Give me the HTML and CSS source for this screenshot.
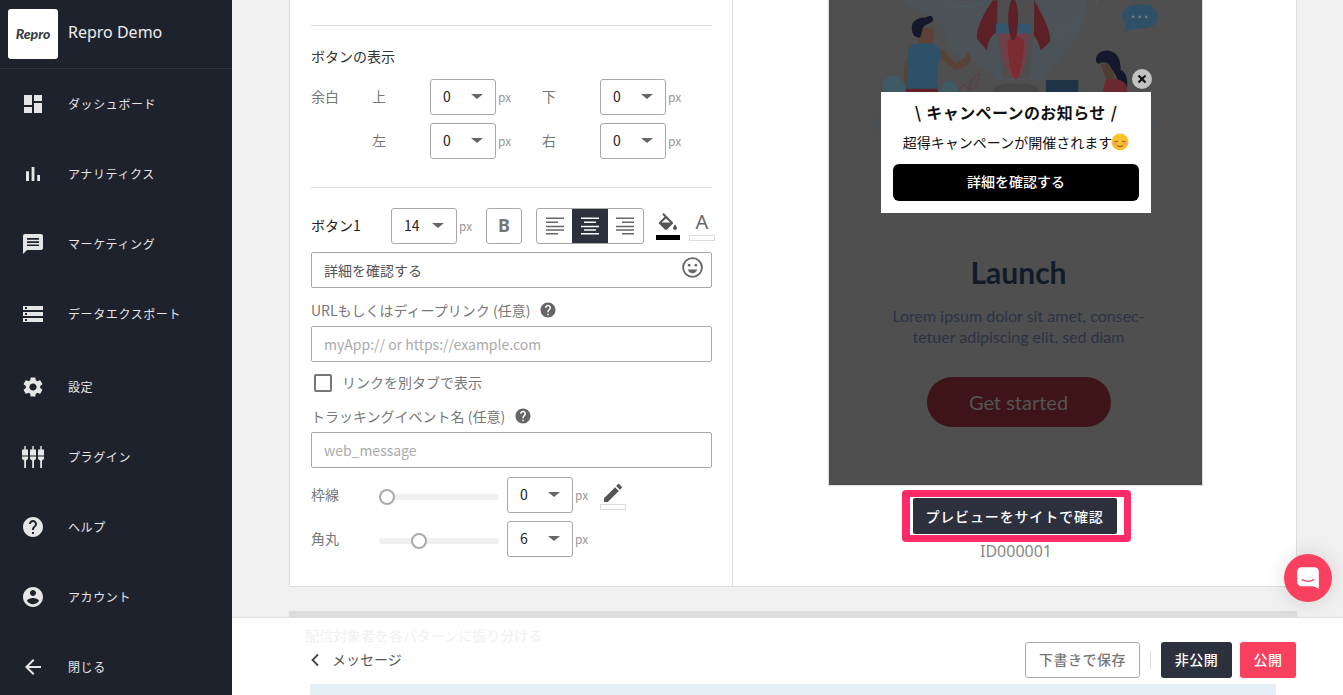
FILE: index.html
```html
<!DOCTYPE html>
<html lang="ja">
<head>
<meta charset="utf-8">
<title>Repro Demo</title>
<link rel="stylesheet" href="styles.css">
</head>
<body>
<aside class="sidebar">
  <div class="brand">
    <div class="logo">Repro</div>
    <div class="brand-name">Repro Demo</div>
  </div>
  <nav class="nav">
    <a class="nav-item"><svg class="nav-icon" viewBox="0 0 24 24"><path d="M3 13h8V3H3v10zm0 8h8v-6H3v6zm10 0h8V11h-8v10zm0-18v6h8V3h-8z"/></svg><span>ダッシュボード</span></a>
    <a class="nav-item"><svg class="nav-icon" viewBox="0 0 24 24"><path d="M5 9.2h3V19H5zM10.6 5h2.8v14h-2.8zm5.6 8H19v6h-2.8z"/></svg><span>アナリティクス</span></a>
    <a class="nav-item"><svg class="nav-icon" viewBox="0 0 24 24"><path fill-rule="evenodd" d="M20 2H4c-1.100 0-2 .9-2 2v18l4-4h14c1.100 0 2-.9 2-2V4c0-1.100-.9-2-2-2zM6 6h12v1.700H6zM6 9.200h12v1.700H6zM6 12.400h12v1.700H6z"/></svg><span>マーケティング</span></a>
    <a class="nav-item"><svg class="nav-icon" viewBox="0 0 24 24"><path d="M2 20h20v-4H2v4zm2-3h2v2H4v-2zM2 4v4h20V4H2zm4 3H4V5h2v2zm-4 7h20v-4H2v4zm2-3h2v2H4v-2z"/></svg><span>データエクスポート</span></a>
    <a class="nav-item nav-group"><svg class="nav-icon" viewBox="0 0 24 24"><path d="M19.140 12.940c.04-.3.06-.61.06-.94 0-.32-.02-.64-.07-.94l2.030-1.580c.18-.14.23-.41.12-.61l-1.920-3.320c-.12-.22-.37-.29-.59-.22l-2.390.96c-.5-.38-1.030-.7-1.620-.94l-.36-2.540c-.04-.24-.24-.41-.48-.41h-3.840c-.24 0-.43.17-.47.41l-.36 2.540c-.59.24-1.130.57-1.620.94l-2.390-.96c-.22-.08-.47 0-.59.22L2.740 8.870c-.12.21-.08.47.12.61l2.030 1.580c-.05.3-.09.63-.09.94s.02.64.07.94l-2.030 1.580c-.18.14-.23.41-.12.61l1.920 3.320c.12.22.37.29.59.22l2.390-.96c.5.38 1.030.7 1.620.94l.36 2.540c.05.24.24.41.48.41h3.840c.24 0 .44-.17.47-.41l.36-2.540c.59-.24 1.130-.56 1.620-.94l2.390.96c.22.08.47 0 .59-.22l1.920-3.320c.12-.22.07-.47-.12-.61l-2.010-1.580zM12 15.600c-1.980 0-3.600-1.620-3.600-3.600s1.620-3.600 3.600-3.600 3.600 1.620 3.600 3.600-1.620 3.600-3.600 3.600z"/></svg><span>設定</span></a>
    <a class="nav-item"><svg class="nav-icon" viewBox="0 0 24 24"><path d="M3.300 1h1.400v3.500h2.300v6H1v-6h2.300zM11.300 1h1.400v3.500H15v6H9v-6h2.300zM19.300 1h1.400v3.500H23v6h-6v-6h2.300zM1 11.500h6v2.500l-2 1.500V23H3.200v-7.500L1 14zM9 11.500h6v2.500l-2 1.500V23h-1.800v-7.500L9 14zM17 11.500h6v2.500l-2 1.500V23h-1.800v-7.500L17 14z"/></svg><span>プラグイン</span></a>
    <a class="nav-item"><svg class="nav-icon" viewBox="0 0 24 24"><path d="M12 2C6.480 2 2 6.480 2 12s4.480 10 10 10 10-4.480 10-10S17.520 2 12 2zm1 17h-2v-2h2v2zm2.070-7.750l-.9.92C13.450 12.900 13 13.500 13 15h-2v-.5c0-1.100.45-2.100 1.170-2.830l1.240-1.260c.37-.36.59-.86.59-1.410 0-1.100-.9-2-2-2s-2 .9-2 2H8c0-2.210 1.790-4 4-4s4 1.790 4 4c0 .88-.36 1.680-.93 2.250z"/></svg><span>ヘルプ</span></a>
    <a class="nav-item"><svg class="nav-icon" viewBox="0 0 24 24"><path d="M12 2C6.480 2 2 6.480 2 12s4.480 10 10 10 10-4.480 10-10S17.520 2 12 2zm0 3c1.660 0 3 1.340 3 3s-1.340 3-3 3-3-1.340-3-3 1.340-3 3-3zm0 14.200c-2.500 0-4.710-1.280-6-3.220.03-1.990 4-3.080 6-3.080 1.990 0 5.970 1.090 6 3.080-1.290 1.940-3.500 3.220-6 3.220z"/></svg><span>アカウント</span></a>
    <a class="nav-item"><svg class="nav-icon" viewBox="0 0 24 24"><path d="M20 11H7.830l5.590-5.590L12 4l-8 8 8 8 1.410-1.410L7.830 13H20v-2z"/></svg><span>閉じる</span></a>
  </nav>
</aside>

<main class="main">
  <section class="card">
    <div class="editor">
      <hr class="rule">
      <h3 class="section-title">ボタンの表示</h3>
      <div class="margins">
        <span class="field-label">余白</span>
        <span class="field-label">上</span>
        <div class="select"><span>0</span><i class="caret"></i></div>
        <span class="unit">px</span>
        <span class="field-label">下</span>
        <div class="select"><span>0</span><i class="caret"></i></div>
        <span class="unit">px</span>
        <span></span>
        <span class="field-label">左</span>
        <div class="select"><span>0</span><i class="caret"></i></div>
        <span class="unit">px</span>
        <span class="field-label">右</span>
        <div class="select"><span>0</span><i class="caret"></i></div>
        <span class="unit">px</span>
      </div>
      <hr class="rule rule-lower">
      <div class="format-row">
        <span class="format-label">ボタン1</span>
        <div class="select"><span>14</span><i class="caret"></i></div>
        <span class="unit unit-format">px</span>
        <div class="bold-btn">B</div>
        <div class="align-group">
          <div class="align-btn"><svg viewBox="0 0 18 18"><path d="M0 .5h18V2H0zM0 4.600h12v1.500H0zM0 8.700h18v1.500H0zM0 12.300h18v1.500H0zM0 16h12v1.500H0z"/></svg></div>
          <div class="align-btn is-active"><svg viewBox="0 0 18 18"><path d="M0 .5h18V2H0zM3 4.600h12v1.500H3zM0 8.700h18v1.500H0zM3 12.300h12v1.500H3zM0 16h18v1.500H0z"/></svg></div>
          <div class="align-btn"><svg viewBox="0 0 18 18"><path d="M0 .5h18V2H0zM6 4.600h12v1.500H6zM0 8.700h18v1.500H0zM0 12.300h18v1.500H0zM6 16h12v1.500H6z"/></svg></div>
        </div>
        <div class="color-tool tool-fill">
          <svg viewBox="0 0 24 20"><path d="M16.560 9.940L7.620 1 6.210 2.410l2.380 2.380-5.150 5.150c-.59.59-.59 1.540 0 2.120l5.500 5.500c.29.29.68.44 1.060.44s.77-.15 1.060-.44l5.500-5.500c.59-.58.59-1.530 0-2.120zM19 12.500s-2 2.170-2 3.500c0 1.100.9 2 2 2s2-.9 2-2c0-1.330-2-3.500-2-3.500z"/><path fill="#fff" d="M10 6.500L14.300 10.500H5.600z"/></svg>
          <span class="swatch swatch-black"></span>
        </div>
        <div class="color-tool tool-text">
          <span class="tool-letter">A</span>
          <span class="swatch swatch-white"></span>
        </div>
      </div>
      <div class="input-wrap">
        <input class="text-input has-value" type="text" value="詳細を確認する">
        <svg class="smile" viewBox="0 0 22 22"><circle cx="11" cy="11" r="9" fill="none" stroke="#666" stroke-width="1.800"/><circle cx="7.800" cy="8.800" r="1.300" fill="#666"/><circle cx="14.200" cy="8.800" r="1.300" fill="#666"/><path d="M6.500 13h9c-.6 2.300-2.400 3.600-4.500 3.600S7.100 15.300 6.500 13z" fill="#666"/></svg>
      </div>
      <div class="hint-label hint-url">URLもしくはディープリンク (任意)<svg class="hint-icon" viewBox="0 0 24 24"><path d="M12 2C6.480 2 2 6.480 2 12s4.480 10 10 10 10-4.480 10-10S17.520 2 12 2zm1 17h-2v-2h2v2zm2.070-7.750l-.9.92C13.450 12.900 13 13.500 13 15h-2v-.5c0-1.100.45-2.100 1.170-2.830l1.240-1.260c.37-.36.59-.86.59-1.410 0-1.100-.9-2-2-2s-2 .9-2 2H8c0-2.210 1.790-4 4-4s4 1.790 4 4c0 .88-.36 1.680-.93 2.250z"/></svg></div>
      <input class="text-input" type="text" placeholder="myApp:// or https://example.com">
      <label class="check-row"><span class="checkbox"></span><span class="check-text">リンクを別タブで表示</span></label>
      <div class="hint-label hint-track">トラッキングイベント名 (任意)<svg class="hint-icon" viewBox="0 0 24 24"><path d="M12 2C6.480 2 2 6.480 2 12s4.480 10 10 10 10-4.480 10-10S17.520 2 12 2zm1 17h-2v-2h2v2zm2.070-7.750l-.9.92C13.450 12.900 13 13.500 13 15h-2v-.5c0-1.100.45-2.100 1.170-2.830l1.240-1.260c.37-.36.59-.86.59-1.410 0-1.100-.9-2-2-2s-2 .9-2 2H8c0-2.210 1.790-4 4-4s4 1.790 4 4c0 .88-.36 1.680-.93 2.250z"/></svg></div>
      <input class="text-input" type="text" placeholder="web_message">
      <div class="slider-row slider-border">
        <span class="slider-label">枠線</span>
        <div class="slider"><i class="thumb" style="left:0"></i></div>
        <div class="select"><span>0</span><i class="caret"></i></div>
        <span class="unit unit-slider">px</span>
        <div class="color-tool tool-pencil">
          <svg viewBox="0 0 24 24"><path d="M3 17.250V21h3.750L17.810 9.940l-3.750-3.750L3 17.250zM20.710 7.040c.39-.39.39-1.020 0-1.410l-2.340-2.340c-.39-.39-1.020-.39-1.410 0l-1.830 1.830 3.750 3.750 1.830-1.830z"/></svg>
          <span class="swatch swatch-white"></span>
        </div>
      </div>
      <div class="slider-row slider-radius">
        <span class="slider-label">角丸</span>
        <div class="slider"><i class="thumb" style="left:32px"></i></div>
        <div class="select"><span>6</span><i class="caret"></i></div>
        <span class="unit unit-slider">px</span>
      </div>
    </div>

    <div class="preview-col">
      <div class="preview">
        <svg class="art" viewBox="3 0 1122 660">
          <path fill="#4c5358" d="M225 0C260 45 345 40 352 105 360 185 470 175 505 240L650 240C690 160 785 120 775 0Z"/>
          <path fill="#4b4e53" d="M135 380C135 345 165 330 200 330L200 395 150 395C140 395 135 390 135 380ZM930 330C965 335 990 355 990 375 990 390 980 395 965 395L930 395Z"/>
          <path fill="none" stroke="#3f6a72" stroke-width="2" stroke-dasharray="7 6" d="M350 0C380 25 440 25 480 0M810 0C800 50 720 80 670 110"/>
          <path fill="#5c2026" d="M497 0C465 40 445 90 448 115L478 150C480 120 495 100 510 95L510 0Z"/>
          <path fill="#5c2026" d="M620 0C650 50 672 100 668 125L640 150C632 120 620 100 605 95Z"/>
          <path fill="#4e4e4e" d="M510 0H620V95L605 235H525L510 95Z"/>
          <path fill="#6f4049" d="M512 95H604C602 165 585 235 565 238 540 235 518 165 512 95Z"/>
          <path fill="#7a2c31" d="M540 130C545 100 585 100 590 130 588 180 575 235 565 238 552 235 542 180 540 130Z"/>
          <rect x="505" y="70" width="105" height="30" fill="#33566c"/>
          <ellipse cx="557" cy="58" rx="15" ry="62" fill="#5c2026"/>
          <path fill="#464646" d="M495 276C495 258 520 250 565 250 610 250 635 258 635 276Z"/>
          <path fill="#3d5a65" d="M165 276C160 245 175 222 200 228 225 232 225 255 250 276ZM335 276C345 245 370 215 395 276Z"/>
          <path fill="none" stroke="#6a2f34" stroke-width="2" d="M395 276C400 255 410 245 420 270M425 270C425 240 445 225 455 220 455 245 445 265 425 270Z"/>
          <path fill="#5a4235" d="M235 180C225 210 228 250 236 276H255L260 180ZM330 168L385 210C400 205 420 195 432 180L422 155 410 175 385 190 340 145Z"/>
          <path fill="#5a4235" d="M268 85H316V125L300 140H275Z"/>
          <path fill="#14182a" d="M252 85C250 60 275 50 295 52 305 45 318 45 316 60 312 72 290 70 285 85 280 100 282 115 270 112 258 110 253 100 252 85Z"/>
          <path fill="#2f5168" d="M262 130L315 130C335 140 345 160 340 172L330 190V268H236L238 175 240 150C245 140 255 132 262 130Z"/>
          <rect x="234" y="266" width="96" height="10" fill="#5c2026"/>
          <rect x="655" y="240" width="98" height="36" rx="3" fill="#1f3446"/>
          <path fill="#4f3c33" d="M820 190H860V235H835Z"/>
          <path fill="#14182a" d="M806 180C806 160 825 148 845 152 870 155 882 180 880 210 895 215 905 235 898 276H880C875 250 868 225 855 210 850 190 835 180 815 190 810 192 806 186 806 180Z"/>
          <path fill="#6a2a30" d="M835 238C850 232 875 236 888 245 900 255 900 265 900 276H825Z"/>
          <path fill="#2f5168" d="M885 45C885 25 905 12 935 12H950C975 12 992 25 992 50 992 72 970 85 945 85H915C908 92 898 95 888 95 895 88 898 80 896 72 888 65 885 55 885 45Z"/>
          <circle cx="918" cy="50" r="4" fill="#6d7d88"/><circle cx="938" cy="50" r="4" fill="#6d7d88"/><circle cx="957" cy="50" r="4" fill="#6d7d88"/>
        </svg>
        <div class="lp">
          <div class="lp-title">Launch</div>
          <p class="lp-text">Lorem ipsum dolor sit amet, consec-<br>tetuer adipiscing elit, sed diam</p>
          <div class="lp-cta">Get started</div>
        </div>
        <div class="popup">
          <div class="popup-close"><svg viewBox="0 0 12 12"><path d="M2.500 2.500l7 7M9.500 2.500l-7 7" stroke="#111" stroke-width="2.200" fill="none"/></svg></div>
          <div class="popup-title">\ キャンペーンのお知らせ /</div>
          <div class="popup-text">超得キャンペーンが開催されます<svg class="popup-emoji" viewBox="0 0 18 18"><circle cx="9" cy="9" r="8.500" fill="#fbc02d"/><path d="M3.500 8c1 1 2.500 1 3.500 0M11 8c1 1 2.500 1 3.500 0M6 12.500c2 1.200 4 1.200 6 0" fill="none" stroke="#7a4a12" stroke-width="1"/><circle cx="4" cy="10.500" r="1.700" fill="#f59a6b"/><circle cx="14" cy="10.500" r="1.700" fill="#f59a6b"/></svg></div>
          <div class="popup-btn">詳細を確認する</div>
        </div>
      </div>
      <div class="highlight"><div class="preview-btn">プレビューをサイトで確認</div></div>
      <div class="preview-id">ID000001</div>
    </div>
  </section>

  <section class="card-next">
    <div class="card-next-title">配信対象者を各パターンに振り分ける</div>
  </section>

  <footer class="actionbar">
    <div class="actions">
      <a class="back"><svg viewBox="0 0 10 14"><path d="M8 1.500L2.500 7 8 12.500" fill="none" stroke="#444" stroke-width="1.800"/></svg><span>メッセージ</span></a>
      <button class="btn btn-outline">下書きで保存</button>
      <span class="btn-sep"></span>
      <button class="btn btn-dark">非公開</button>
      <button class="btn btn-red">公開</button>
    </div>
    <div class="notice"></div>
  </footer>

  <div class="messenger"><svg viewBox="0 0 24 24"><path fill="#fff" d="M6 2h12c2.200 0 4 1.800 4 4v16l-5-2.300H6c-2.200 0-4-1.800-4-4V6c0-2.200 1.800-4 4-4z"/><path fill="none" stroke="#f9415f" stroke-width="1.100" stroke-linecap="round" d="M6.500 13.500c3.200 1.800 7.800 1.800 11 0"/></svg></div>
</main>
</body>
</html>
```
FILE: styles.css
```css
* { box-sizing: border-box; }
html, body { margin: 0; height: 100%; }
body {
  display: flex;
  height: 695px;
  overflow: hidden;
  font-family: "Noto Sans CJK JP", "Noto Sans", sans-serif;
  font-size: 14px;
  color: #333;
  background: #f0f0f0;
}

/* sidebar */
.sidebar { width: 232px; flex: none; background: #1e222d; color: #e6e6e6; }
.brand { height: 69px; display: flex; align-items: center; padding: 0 8px 1px; border-bottom: 1px solid #2f333e; }
.logo {
  width: 50px; height: 50px; background: #fff; border-radius: 3px;
  display: flex; align-items: center; justify-content: center;
  font-family: Lato, sans-serif; font-weight: 900; font-style: italic; font-size: 14px; color: #3a3d4a;
}
.brand-name { margin-left: 10px; font-size: 16px; color: #eee; font-family: "Noto Sans", sans-serif; padding-bottom: 4px; }
.nav-item { display: flex; align-items: center; height: 70px; padding-left: 21px; font-size: 12px; letter-spacing: .6px; }
.nav-item span { padding-bottom: 2px; }
.nav-group { margin-top: 3px; }
.nav-icon { width: 24px; height: 24px; fill: #e6e6e6; margin-right: 23px; flex: none; }

/* main */
.main { flex: 1; position: relative; overflow: hidden; padding: 0 46px 0 57px; }
.card { display: flex; height: 587px; background: #fff; border: 1px solid #ddd; border-top: 0; }
.editor { width: 443px; flex: none; border-right: 1px solid #ddd; padding: 25px 20px 0 21px; }
.rule { margin: 0; border: 0; border-top: 1px solid #ddd; }
.rule-lower { margin: 28px 0 20px; }
.section-title { margin: 20px 0 13px; font-size: 14px; line-height: 20px; font-weight: 400; color: #333; }
.field-label { color: #777; align-self: center; padding-bottom: 2px; }
.margins { display: grid; grid-template-columns: 61px 58px 66px 46px 58px 66px auto; row-gap: 8px; }
.select {
  width: 66px; height: 36px; flex: none; display: flex; align-items: center; justify-content: space-between;
  padding: 0 12px; border: 1px solid #a8a8a8; border-radius: 3px; background: #fff; color: #222; font-size: 14px;
}
.select span { padding-bottom: 2px; }
.caret { width: 0; height: 0; border-left: 6px solid transparent; border-right: 6px solid transparent; border-top: 5px solid #666; margin: 0 0 1px 0; }
.unit { font-size: 12px; color: #999; align-self: center; padding: 0 0 2px 2px; flex: none; }
.format-row { display: flex; align-items: center; height: 36px; }
.format-label { width: 80px; flex: none; color: #222; padding-bottom: 2px; }
.unit-format { width: 29px; }
.bold-btn {
  width: 36px; height: 36px; flex: none; border: 1px solid #a8a8a8; border-radius: 3px; display: flex; align-items: center; justify-content: center;
  font-family: "Noto Sans", sans-serif; font-weight: 700; font-size: 18px; color: #777; padding-bottom: 2px;
}
.align-group { display: flex; flex: none; margin-left: 14px; border: 1px solid #a8a8a8; border-radius: 3px; overflow: hidden; height: 36px; width: 108px; }
.align-btn { flex: 1; display: flex; align-items: center; justify-content: center; fill: #666; }
.align-btn svg { width: 18px; height: 18px; }
.align-btn.is-active { background: #2d303d; fill: #fff; }
.color-tool { display: flex; flex-direction: column; align-items: center; flex: none; }
.tool-fill { width: 24px; margin-left: 12px; fill: #555; }
.tool-fill svg { width: 24px; height: 20px; }
.swatch { display: block; }
.swatch-black { width: 24px; height: 5px; background: #000; margin-top: 3px; }
.swatch-white { width: 26px; height: 6px; background: #fff; border: 1px solid #ddd; }
.tool-text { width: 26px; margin-left: 9px; }
.tool-letter { font-family: "Noto Sans", sans-serif; font-size: 20px; line-height: 22px; color: #666; }
.tool-text .swatch { margin-top: 2px; }
.input-wrap { position: relative; margin-top: 8px; }
.text-input {
  display: block; width: 100%; height: 36px; padding: 0 12px; border: 1px solid #a8a8a8; border-radius: 2px;
  font-family: inherit; font-size: 14px; color: #555; outline: 0; background: #fff;
}
.text-input.has-value { padding-bottom: 1px; }
.text-input::placeholder { color: #aaa; opacity: 1; }
.smile { position: absolute; right: 8px; top: 4px; width: 23px; height: 23px; }
.hint-label { display: flex; align-items: center; line-height: 20px; color: #777; margin-bottom: 6px; }
.hint-url { margin-top: 12px; }
.hint-track { margin-top: 13px; }
.hint-icon { width: 18px; height: 18px; fill: #666; margin-left: 9px; }
.check-row { display: flex; align-items: center; height: 20px; margin-top: 11px; padding-left: 3px; color: #777; }
.check-text { padding-bottom: 2px; }
.checkbox { width: 18px; height: 18px; border: 2px solid #777; border-radius: 2px; margin-right: 10px; }
.slider-row { display: flex; align-items: center; height: 36px; }
.slider-border { margin-top: 9px; }
.slider-radius { margin-top: 8px; }
.slider-label { width: 68px; flex: none; color: #777; padding-bottom: 2px; }
.slider { position: relative; width: 120px; flex: none; height: 6px; margin: 3px 8px 0 0; background: #f0f0f0; border-radius: 3px; }
.thumb { position: absolute; top: -5px; width: 16px; height: 16px; border-radius: 50%; background: #fff; border: 2px solid #aaa; }
.unit-slider { width: 27px; }
.tool-pencil { width: 26px; fill: #555; }
.tool-pencil svg { width: 24px; height: 24px; margin-bottom: -1px; }

/* preview column */
.preview-col { flex: 1; display: flex; flex-direction: column; align-items: center; padding-left: 3px; }
.preview { position: relative; width: 375px; height: 486px; margin-left: -1px; background: #4f4f4f; border: 1px solid #ddd; border-top: 0; }
.art { position: absolute; left: 0; top: 0; width: 373px; height: 220px; }
.lp { position: absolute; left: 6px; right: 0; top: 253px; display: flex; flex-direction: column; align-items: center; font-family: Lato, sans-serif; }
.lp-title { font-size: 30px; line-height: 38px; font-weight: 700; color: #111b2a; }
.lp-text { margin: 14px 0 0; text-align: center; font-size: 16px; line-height: 21px; color: #2c3345; }
.lp-cta {
  width: 184px; height: 50px; margin-top: 30px; border-radius: 25px; background: #3e1419;
  display: flex; align-items: center; justify-content: center; font-size: 20px; color: #555; padding-bottom: 1px;
}
.popup { position: absolute; left: 52px; top: 92px; width: 270px; height: 121px; background: #fff; padding: 0 12px; text-align: center; color: #111; }
.popup-close { position: absolute; right: -1px; top: -23px; width: 20px; height: 20px; border-radius: 50%; background: #c2c2c2; display: flex; align-items: center; justify-content: center; }
.popup-close svg { width: 12px; height: 12px; }
.popup-title { font-size: 16px; font-weight: 700; line-height: 24px; padding-top: 8px; height: 33px; white-space: nowrap; letter-spacing: .4px; word-spacing: 1px; }
.popup-text { font-size: 14px; line-height: 20px; margin-top: 6px; height: 21px; display: flex; align-items: center; justify-content: center; white-space: nowrap; }
.popup-emoji { width: 18px; height: 18px; margin-left: -1px; }
.popup-btn {
  height: 37px; margin-top: 12px; background: #000; color: #fff; border-radius: 6px; font-size: 14px; font-weight: 500; padding-bottom: 4px;
  display: flex; align-items: center; justify-content: center;
}
.highlight { width: 229px; height: 52px; margin-top: 4px; border: 8px solid #ff2a68; border-width: 7px 7px 7px 8px; border-radius: 4px; background: #fff; display: flex; align-items: center; justify-content: center; padding-right: 4px; }
.preview-btn {
  width: 204px; height: 36px; flex: none; background: #2d303d; color: #fff; border-radius: 2px; font-size: 14px; font-weight: 500; letter-spacing: .85px; padding-bottom: 1px;
  display: flex; align-items: center; justify-content: center; white-space: nowrap;
}
.preview-id { font-size: 16px; line-height: 19px; color: #888; font-family: "Noto Sans", sans-serif; }

/* next card behind the bar */
.card-next { margin-top: 24px; height: 120px; background: #fff; border-top: 7px solid #dcdcdc; }
.card-next-title { padding: 7px 0 0 16px; font-size: 14px; line-height: 20px; font-weight: 500; color: #777; }

/* action bar */
.actionbar {
  position: absolute; left: 0; right: 0; top: 617px; height: 78px; padding: 24px 47px 0 78px;
  border-top: 1px solid #ddd;
  background: linear-gradient(rgba(255,255,255,.9) 46px, #fff 46px);
}
.actions { display: flex; align-items: center; height: 36px; }
.back { display: flex; align-items: center; margin-right: auto; padding-bottom: 1px; color: #555; }
.back span { padding-bottom: 2px; }
.back svg { width: 10px; height: 14px; margin-right: 12px; }
.btn { height: 36px; border-radius: 3px; font-family: inherit; font-size: 14px; padding: 0 0 2px; font-weight: 500; flex: none; }
.btn-outline { width: 115px; background: #fff; border: 1px solid #aaa; color: #777; letter-spacing: .5px; }
.btn-sep { width: 1px; height: 18px; background: #ddd; margin: 0 10px; }
.btn-dark { width: 71px; background: #2d303d; border: 0; color: #fff; letter-spacing: .5px; }
.btn-red { width: 56px; margin-left: 8px; background: #f9415f; border: 0; color: #fff; letter-spacing: .5px; }
.notice { height: 12px; margin: 6px 20px 0 0; background: #e4f0f6; }

.messenger {
  position: absolute; left: 1052px; top: 554px; width: 48px; height: 48px; border-radius: 50%; background: #f9415f;
  display: flex; align-items: center; justify-content: center; box-shadow: 0 0 20px rgba(0,0,0,.12);
}
.messenger svg { width: 26px; height: 26px; }
```
